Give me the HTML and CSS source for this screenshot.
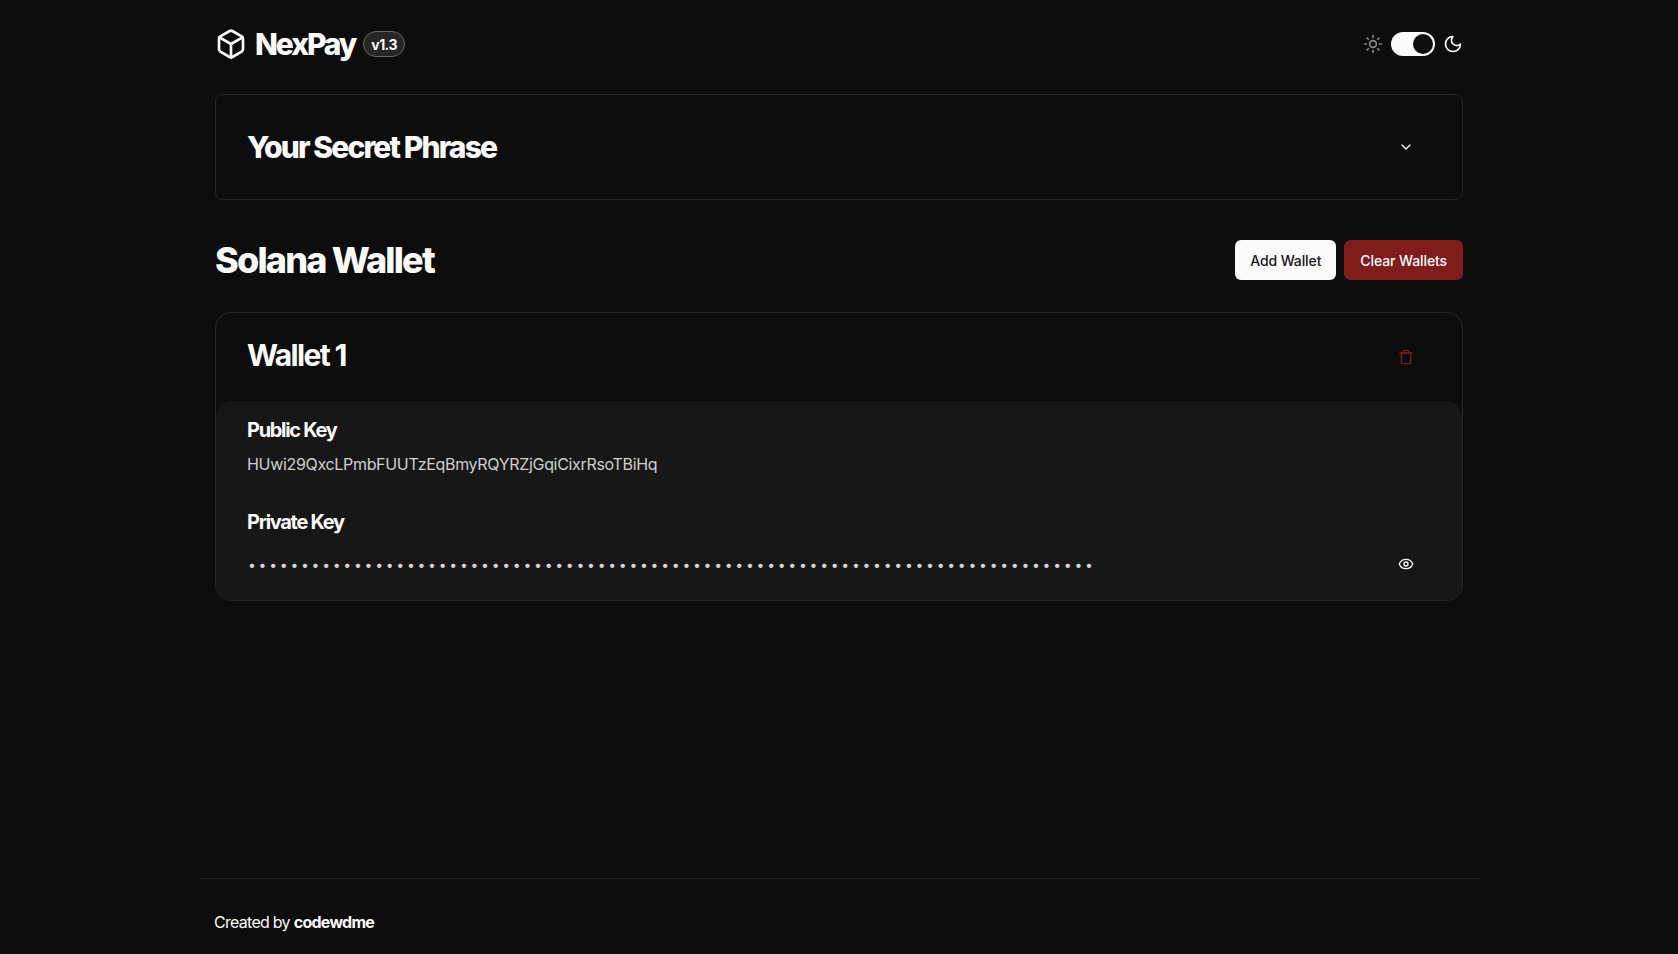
FILE: index.html
```html
<!DOCTYPE html>
<html lang="en">
<head>
  <meta charset="UTF-8" />
  <meta name="viewport" content="width=device-width, initial-scale=1.0" />
  <title>NexPay</title>
  <link rel="stylesheet" href="styles.css">
</head>
<body>
  <div class="page">
    <!-- Top bar -->
    <header class="topbar">
      <div class="brand">
        <svg class="brand-icon" width="32" height="32" viewBox="0 0 24 24" fill="none" stroke="currentColor" stroke-width="2" stroke-linecap="round" stroke-linejoin="round">
          <path d="M21 8a2 2 0 0 0-1-1.73l-7-4a2 2 0 0 0-2 0l-7 4A2 2 0 0 0 3 8v8a2 2 0 0 0 1 1.73l7 4a2 2 0 0 0 2 0l7-4A2 2 0 0 0 21 16Z"/>
          <path d="m3.3 7 8.7 5 8.7-5"/>
          <path d="M12 22V12"/>
        </svg>
        <span class="brand-name">NexPay</span>
        <span class="version">v1.3</span>
      </div>
      <div class="theme">
        <svg class="sun" width="20" height="20" viewBox="0 0 24 24" fill="none" stroke="currentColor" stroke-width="2" stroke-linecap="round" stroke-linejoin="round">
          <circle cx="12" cy="12" r="4"/>
          <path d="M12 2v2"/><path d="M12 20v2"/>
          <path d="m4.93 4.93 1.41 1.41"/><path d="m17.66 17.66 1.41 1.41"/>
          <path d="M2 12h2"/><path d="M20 12h2"/>
          <path d="m6.34 17.66-1.41 1.41"/><path d="m19.07 4.93-1.41 1.41"/>
        </svg>
        <div class="switch"><div class="knob"></div></div>
        <svg width="20" height="20" viewBox="0 0 24 24" fill="none" stroke="currentColor" stroke-width="2" stroke-linecap="round" stroke-linejoin="round">
          <path d="M12 3a6 6 0 0 0 9 9 9 9 0 1 1-9-9Z"/>
        </svg>
      </div>
    </header>

    <main class="content">
      <!-- Secret phrase accordion -->
      <section class="phrase">
        <h2>Your Secret Phrase</h2>
        <span class="icon-btn">
          <svg width="16" height="16" viewBox="0 0 24 24" fill="none" stroke="currentColor" stroke-width="2" stroke-linecap="round" stroke-linejoin="round">
            <path d="m6 9 6 6 6-6"/>
          </svg>
        </span>
      </section>

      <div class="wallets-head">
        <h1>Solana Wallet</h1>
        <div class="actions">
          <button class="btn btn-light">Add Wallet</button>
          <button class="btn btn-danger">Clear Wallets</button>
        </div>
      </div>

      <!-- Wallet card -->
      <section class="wallet">
        <div class="wallet-head">
          <h3>Wallet 1</h3>
          <span class="icon-btn trash">
            <svg width="16" height="16" viewBox="0 0 24 24" fill="none" stroke="currentColor" stroke-width="2" stroke-linecap="round" stroke-linejoin="round">
              <path d="M3 6h18"/>
              <path d="M19 6v14c0 1-1 2-2 2H7c-1 0-2-1-2-2V6"/>
              <path d="M8 6V4c0-1 1-2 2-2h4c1 0 2 1 2 2v2"/>
            </svg>
          </span>
        </div>
        <div class="keys">
          <div class="key-label">Public Key</div>
          <p class="key-value">HUwi29QxcLPmbFUUTzEqBmyRQYRZjGqiCixrRsoTBiHq</p>
          <div class="key-label private-label">Private Key</div>
          <div class="private-row">
            <span class="dots">••••••••••••••••••••••••••••••••••••••••••••••••••••••••••••••••••••••••••••••••</span>
            <span class="icon-btn">
              <svg width="16" height="16" viewBox="0 0 24 24" fill="none" stroke="currentColor" stroke-width="2" stroke-linecap="round" stroke-linejoin="round">
                <path d="M2.06 12.35a1 1 0 0 1 0-.7 10.75 10.75 0 0 1 19.88 0 1 1 0 0 1 0 .7 10.75 10.75 0 0 1-19.88 0"/>
                <circle cx="12" cy="12" r="3"/>
              </svg>
            </span>
          </div>
        </div>
      </section>
    </main>

    <footer class="footer">
      <p>Created by <strong>codewdme</strong></p>
    </footer>
  </div>
</body>
</html>
```

FILE: styles.css
```css
/* Base styling */
* {
  box-sizing: border-box;
}
html, body {
  height: 100%;
}
body {
  font-family: Inter, "Noto Sans", sans-serif;
  background-color: #0d0d0d;
  color: #fafafa;
  margin: 0;
}
.page {
  width: 1280px;
  height: 954px;
  margin: 0 auto;
  display: flex;
  flex-direction: column;
}
h1, h2, h3, p {
  margin: 0;
}

/* Top bar */
.topbar {
  height: 94px;
  padding: 0 16px 6px;
  display: flex;
  align-items: center;
  justify-content: space-between;
}
.brand {
  display: flex;
  align-items: center;
}
.brand-name {
  margin-left: 8px;
  font-size: 30px;
  font-weight: 800;
  letter-spacing: -0.07em;
}
.version {
  margin-left: 8px;
  height: 26px;
  padding: 0 7px;
  display: flex;
  align-items: center;
  border: 1px solid #666;
  border-radius: 13px;
  background: #262626;
  font-size: 14px;
  font-weight: 700;
  letter-spacing: -0.04em;
}
.theme {
  display: flex;
  align-items: center;
  gap: 8px;
}
.sun {
  color: #8a8a8a;
}
.switch {
  width: 44px;
  height: 24px;
  padding: 2px;
  border-radius: 12px;
  background: #fafafa;
  display: flex;
  justify-content: flex-end;
}
.knob {
  width: 20px;
  height: 20px;
  border-radius: 50%;
  background: #0d0d0d;
}

/* Main content */
.content {
  flex: 1;
  padding: 0 16px;
}
.phrase {
  height: 106px;
  padding: 0 32px 0 31px;
  display: flex;
  align-items: center;
  justify-content: space-between;
  border: 1px solid #262626;
  border-radius: 8px;
}
.phrase h2 {
  font-size: 30px;
  font-weight: 800;
  letter-spacing: -0.062em;
}
.icon-btn {
  width: 40px;
  height: 40px;
  display: flex;
  align-items: center;
  justify-content: center;
  margin-right: 4px;
}
.wallets-head {
  margin-top: 40px;
  height: 40px;
  display: flex;
  align-items: center;
  justify-content: space-between;
}
.wallets-head h1 {
  font-size: 36px;
  font-weight: 800;
  letter-spacing: -0.05em;
}
.actions {
  display: flex;
  gap: 8px;
}
.btn {
  height: 40px;
  padding: 0 16px;
  border: none;
  border-radius: 6px;
  font-family: inherit;
  font-size: 14px;
  font-weight: 500;
  letter-spacing: -0.1px;
}
.btn-light {
  padding: 0 15px;
  background: #fafafa;
  color: #171717;
}
.btn-danger {
  background: #7f1d1d;
  color: #fafafa;
}

/* Wallet card */
.wallet {
  margin-top: 32px;
  border: 1px solid #262626;
  border-radius: 16px;
}
.wallet-head {
  height: 88px;
  padding: 0 32px 4px 31px;
  display: flex;
  align-items: center;
  justify-content: space-between;
}
.wallet-head h3 {
  font-size: 30px;
  font-weight: 700;
  letter-spacing: -0.055em;
}
.trash {
  margin-top: 3px;
  color: #7f1d1d;
}
.keys {
  padding: 15px 32px 16px 31px;
  background: #171717;
  border-radius: 16px;
}
.key-label {
  font-size: 20px;
  font-weight: 700;
  line-height: 28px;
  letter-spacing: -0.065em;
}
.key-value {
  margin-top: 8px;
  font-size: 16px;
  line-height: 24px;
  color: #cfcfcf;
  letter-spacing: -0.02em;
}
.private-label {
  margin-top: 32px;
}
.private-row {
  margin-top: 8px;
  height: 40px;
  display: flex;
  align-items: center;
  justify-content: space-between;
}
.dots {
  font-size: 14px;
  color: #d4d4d4;
  letter-spacing: 2.72px;
  margin-left: 1px;
}

/* Footer */
.footer {
  height: 76px;
  padding: 11px 16px 0 15px;
  display: flex;
  align-items: center;
  border-top: 1px solid #222;
  font-size: 16px;
  letter-spacing: -0.045em;
}
.footer strong {
  font-weight: 700;
}
```
